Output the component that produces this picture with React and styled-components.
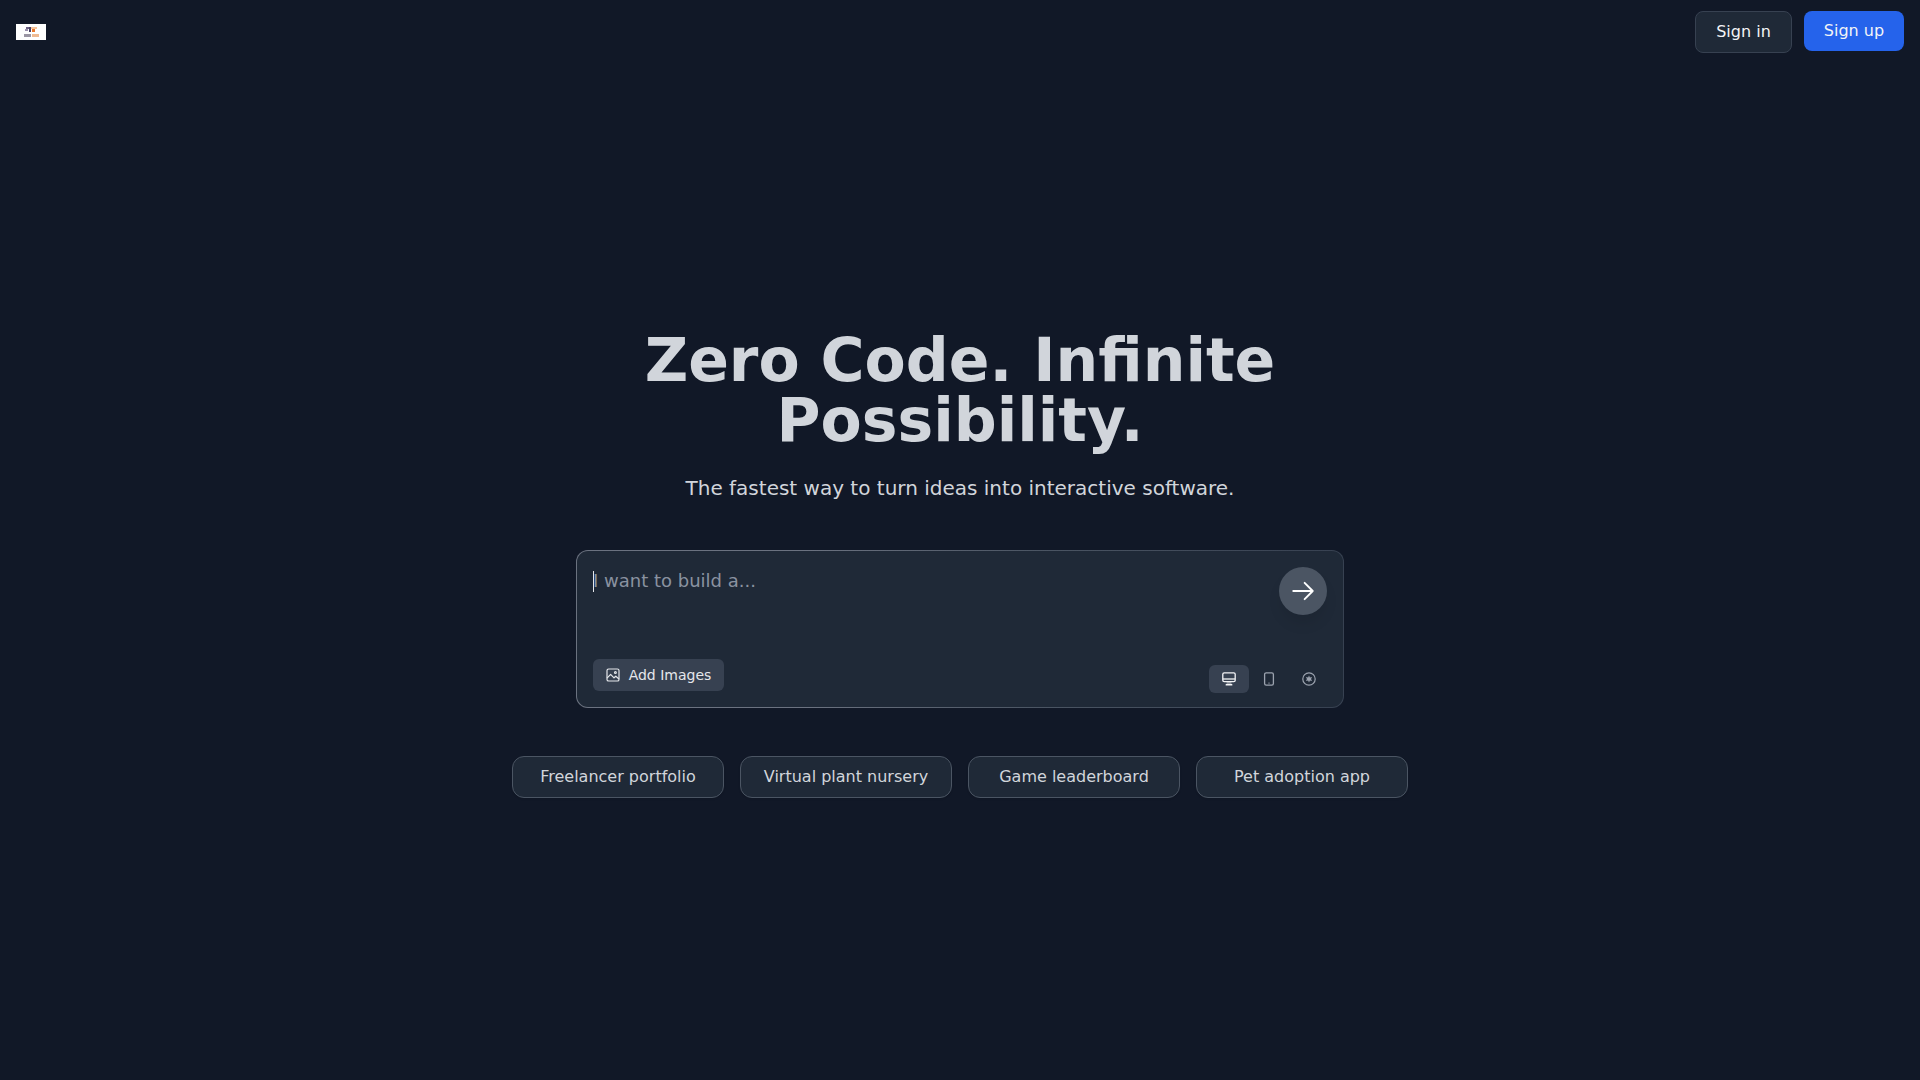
import React from "react";
import styled, { createGlobalStyle } from "styled-components";

const Global = createGlobalStyle`
  html, body { margin: 0; padding: 0; background: #111827; }
  body { font-family: "DejaVu Sans", sans-serif; }
  * { box-sizing: border-box; }
`;

const Page = styled.div`
  width: 100%;
  min-height: 1080px;
  background: #111827;
  display: flex;
  flex-direction: column;
  overflow: hidden;
`;

const Header = styled.header`
  display: flex;
  align-items: flex-start;
  justify-content: space-between;
  padding: 11px 16px 0;
  height: 64px;
`;

const Logo = styled.svg`
  display: block;
  width: 30px;
  height: 16px;
  margin-top: 13px;
`;

const Auth = styled.div`
  display: flex;
  align-items: flex-start;
  gap: 12px;
`;

const SignIn = styled.button`
  width: 97px;
  height: 42px;
  border: 1px solid #374151;
  border-radius: 8px;
  background: #1f2937;
  color: #f3f4f6;
  font: 16px/24px "DejaVu Sans", sans-serif;
`;

const SignUp = styled.button`
  width: 100px;
  height: 40px;
  border: 0;
  border-radius: 8px;
  background: #2563eb;
  color: #f3f4f6;
  font: 16px/24px "DejaVu Sans", sans-serif;
`;

const Main = styled.main`
  display: flex;
  flex-direction: column;
  align-items: center;
  padding-top: 266px;
`;

const Title = styled.h1`
  margin: 0;
  width: 768px;
  text-align: center;
  font-size: 60px;
  line-height: 60px;
  font-weight: 700;
  color: #d1d5db;
`;

const Subtitle = styled.p`
  margin: 24px 0 0;
  font-size: 20px;
  line-height: 28px;
  color: #d1d5db;
`;

const Card = styled.div`
  width: 768px;
  height: 158px;
  margin-top: 48px;
  padding: 16px;
  display: flex;
  flex-direction: column;
  justify-content: space-between;
  border: 1px solid transparent;
  border-radius: 12px;
  background:
    linear-gradient(#1f2937, #1f2937) padding-box,
    linear-gradient(90deg, #6b7280 0%, #6b7280 30%, #4b5563 60%, #374151 100%) border-box;
`;

const InputRow = styled.div`
  display: flex;
  justify-content: space-between;
  align-items: flex-start;
`;

const Placeholder = styled.div`
  position: relative;
  font-size: 18px;
  line-height: 28px;
  color: #8a92a0;
`;

const Caret = styled.span`
  position: absolute;
  left: 0;
  top: 4px;
  width: 1px;
  height: 21px;
  background: #e5e7eb;
`;

const Send = styled.button`
  width: 48px;
  height: 48px;
  border: 0;
  border-radius: 50%;
  padding: 0;
  background: #4b5563;
  color: #fff;
  display: flex;
  align-items: center;
  justify-content: center;
  box-shadow: 0 10px 15px -3px rgba(0, 0, 0, 0.1);
`;

const Tools = styled.div`
  display: flex;
  justify-content: space-between;
  align-items: flex-end;
`;

const AddImages = styled.button`
  height: 32px;
  width: 131px;
  border: 0;
  border-radius: 6px;
  background: #374151;
  color: #e5e7eb;
  display: flex;
  align-items: center;
  justify-content: center;
  gap: 9px;
  padding: 0;
  font: 14px/20px "DejaVu Sans", sans-serif;
`;

const Modes = styled.div`
  display: flex;
  margin-right: -2px;
  margin-bottom: -2px;
`;

const Mode = styled.button`
  width: 40px;
  height: 28px;
  border: 0;
  border-radius: 6px;
  padding: 0;
  display: flex;
  align-items: center;
  justify-content: center;
  background: ${(p) => (p.$active ? "#374151" : "transparent")};
  color: ${(p) => (p.$active ? "#f3f4f6" : "#9ca3af")};
`;

const Chips = styled.div`
  display: flex;
  gap: 16px;
  margin-top: 48px;
`;

const Chip = styled.button`
  width: 212px;
  height: 42px;
  border: 1px solid #4b5563;
  border-radius: 12px;
  background: #1f2937;
  color: #d1d5db;
  font: 16px/24px "DejaVu Sans", sans-serif;
  box-shadow: 0 1px 2px rgba(0, 0, 0, 0.1);
`;

const ArrowIcon = () => (
  <svg width="26" height="26" viewBox="0 0 24 24" fill="none" stroke="currentColor" strokeWidth="1.75" strokeLinecap="round" strokeLinejoin="round">
    <path d="M13.5 4.5 21 12l-7.5 7.5M21 12H3" />
  </svg>
);

const ImageIcon = () => (
  <svg width="14" height="14" viewBox="0 0 14 14" fill="none" stroke="currentColor" strokeWidth="1.2" strokeLinejoin="round">
    <rect x="1" y="1" width="12" height="12" rx="1.6" />
    <path d="M1 10.2 4.6 6.4l3.4 3.4 1.8-1.6L13 11" />
    <circle cx="9.4" cy="4.4" r="0.9" />
  </svg>
);

const DesktopIcon = () => (
  <svg width="14" height="14" viewBox="0 0 14 14" fill="none">
    <rect x="0.8" y="0.8" width="12.4" height="8.8" rx="1.4" stroke="currentColor" strokeWidth="1.3" />
    <path d="M1 7h12" stroke="currentColor" strokeWidth="1.3" />
    <rect x="4.6" y="10.2" width="4.8" height="1.6" fill="currentColor" opacity="0.5" />
    <rect x="3.6" y="12" width="6.8" height="1.4" rx="0.5" fill="currentColor" />
  </svg>
);

const PhoneIcon = () => (
  <svg width="14" height="14" viewBox="0 0 14 14" fill="none" stroke="currentColor" strokeWidth="1.3">
    <rect x="2.6" y="0.8" width="8.8" height="12.4" rx="1.6" />
    <path d="M6.5 11.2h1" />
  </svg>
);

const TargetIcon = () => (
  <svg width="14" height="14" viewBox="0 0 14 14" fill="none" stroke="currentColor" strokeWidth="1.2">
    <circle cx="7" cy="7" r="6.2" />
    <path
      d="M7 3.6 7.9 5.5 10 5 9.1 7 10 9 7.9 8.5 7 10.4 6.1 8.5 4 9 4.9 7 4 5 6.1 5.5Z"
      fill="currentColor"
      stroke="none"
    />
  </svg>
);

const LogoMark = () => (
  <Logo viewBox="0 0 30 16">
    <rect width="30" height="16" fill="#ffffff" />
    <rect x="10" y="3" width="5" height="2" fill="#6d6084" />
    <rect x="9" y="5" width="3" height="2" fill="#9a90ac" />
    <rect x="13" y="3" width="2" height="5" fill="#4a4368" />
    <rect x="15" y="3" width="6" height="2" fill="#f6c49b" />
    <rect x="16" y="5" width="3" height="3" fill="#e8772a" />
    <rect x="8" y="10" width="7" height="3" fill="#9b96a4" />
    <rect x="16" y="10" width="7" height="3" fill="#efbb93" />
  </Logo>
);

const suggestions = ["Freelancer portfolio", "Virtual plant nursery", "Game leaderboard", "Pet adoption app"];

export default function App() {
  return (
    <Page>
      <Global />
      <Header>
        <LogoMark />
        <Auth>
          <SignIn>Sign in</SignIn>
          <SignUp>Sign up</SignUp>
        </Auth>
      </Header>
      <Main>
        <Title>Zero Code. Infinite Possibility.</Title>
        <Subtitle>The fastest way to turn ideas into interactive software.</Subtitle>
        <Card>
          <InputRow>
            <Placeholder>
              <Caret />
              I want to build a...
            </Placeholder>
            <Send aria-label="Send"><ArrowIcon /></Send>
          </InputRow>
          <Tools>
            <AddImages><ImageIcon />Add Images</AddImages>
            <Modes>
              <Mode $active aria-label="Desktop"><DesktopIcon /></Mode>
              <Mode aria-label="Mobile"><PhoneIcon /></Mode>
              <Mode aria-label="Other"><TargetIcon /></Mode>
            </Modes>
          </Tools>
        </Card>
        <Chips>
          {suggestions.map((s) => <Chip key={s}>{s}</Chip>)}
        </Chips>
      </Main>
    </Page>
  );
}
